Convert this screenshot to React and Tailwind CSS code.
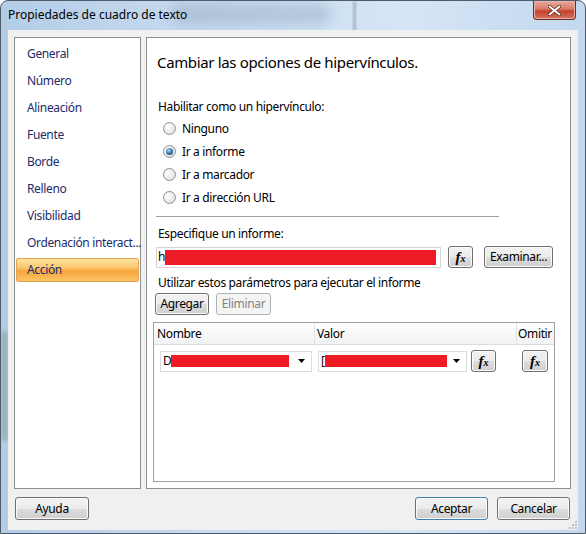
import clsx from 'clsx';

const sections = [
  'General',
  'Número',
  'Alineación',
  'Fuente',
  'Borde',
  'Relleno',
  'Visibilidad',
  'Ordenación interact...',
  'Acción',
];

function Win7Button({ children, className, disabled = false, primary = false }) {
  return (
    <button
      className={clsx(
        'flex h-[22px] items-center justify-center rounded-[3px] border text-[12px] leading-none',
        disabled
          ? 'border-[#adb2b5] bg-[#f4f4f4] text-[#838383]'
          : 'bg-[linear-gradient(to_bottom,#f2f2f2_0%,#ebebeb_50%,#dddddd_51%,#cfcfcf_100%)] text-black shadow-[inset_0_0_0_1px_#fbfbfb]',
        !disabled && (primary ? 'border-[#3c7fb1] shadow-[inset_0_0_0_1px_#a6dcf5]' : 'border-[#707070]'),
        className
      )}
    >
      {children}
    </button>
  );
}

function FxButton({ className }) {
  return (
    <Win7Button className={clsx('h-[20px] w-[25px]', className)}>
      <span className="font-['Liberation_Serif',serif] text-[15px] font-bold italic leading-none tracking-normal">
        f<span className="text-[10px]">x</span>
      </span>
    </Win7Button>
  );
}

function Radio({ label, checked = false }) {
  return (
    <div className="flex h-[23px] items-center">
      <span className="ml-[7px] flex h-[13px] w-[13px] items-center justify-center rounded-full border border-[#8e8f8f] bg-[radial-gradient(circle_at_35%_35%,#ffffff,#d9d9d9)]">
        {checked && (
          <span className="h-[7px] w-[7px] rounded-full bg-[radial-gradient(circle_at_40%_35%,#a9dcf7,#2a6fa3_55%,#173f63)]" />
        )}
      </span>
      <span className="ml-[6px]">{label}</span>
    </div>
  );
}

function DropArrow() {
  return (
    <svg width="7" height="4" viewBox="0 0 7 4" className="ml-auto">
      <path d="M0 0h7L3.5 4z" fill="#000" />
    </svg>
  );
}

function Combo({ lead, redWidth, className }) {
  return (
    <div className={clsx('flex h-[21px] items-center border border-[#dcdcdc] bg-white pl-[2px] pr-[6px]', className)}>
      <span className="leading-none">{lead}</span>
      <span className="h-[12px] bg-[#ed1c24]" style={{ width: redWidth }} />
      <DropArrow />
    </div>
  );
}

export default function App() {
  return (
    <div className="relative flex h-[534px] w-[586px] flex-col overflow-hidden rounded-t-[8px] border border-[#4f5b68] bg-[linear-gradient(to_right,#b4cde6,#c9ddf2_40%,#d5e5f6_70%,#c3d8ee)] font-['Noto_Sans',sans-serif] text-[12px] tracking-[-0.35px] text-black">
      {/* blurred shapes of the window behind the glass frame */}
      <div className="pointer-events-none absolute left-[170px] top-[2px] h-[22px] w-[160px] rounded-full bg-[#8ea3b8] opacity-40 blur-[6px]" />
      <div className="pointer-events-none absolute left-[352px] top-0 h-[30px] w-[3px] bg-[#7d8ea0] opacity-50 blur-[1px]" />
      <div className="pointer-events-none absolute left-0 top-[330px] h-[110px] w-[7px] bg-[#6f9a8a] opacity-50 blur-[2px]" />

      {/* title bar */}
      <div className="relative flex h-[29px] items-start justify-between pl-[7px] pr-[9px]">
        <span className="pt-[6px] text-[12px] leading-[16px] tracking-normal">Propiedades de cuadro de texto</span>
        <button className="flex h-[19px] w-[43px] items-center justify-center rounded-b-[4px] border border-t-0 border-[#6e2a22] bg-[linear-gradient(to_bottom,#e8aa9e_0%,#d77a68_45%,#c4412e_55%,#d5725c_100%)] shadow-[inset_0_0_0_1px_#eab3a7]">
          <svg width="13" height="11" viewBox="0 0 13 11">
            <path
              d="M1.5 1.5l10 8M11.5 1.5l-10 8"
              stroke="#5b2018"
              strokeWidth="3.4"
              strokeLinecap="round"
            />
            <path
              d="M1.5 1.5l10 8M11.5 1.5l-10 8"
              stroke="#ffffff"
              strokeWidth="2"
              strokeLinecap="round"
            />
          </svg>
        </button>
      </div>

      {/* client area */}
      <div className="relative mx-[7px] mb-[3px] flex flex-1 flex-col bg-[#f0f0f0] pl-[6px] pr-[7px] pt-[7px]">
        <div className="flex h-[452px] gap-[5px]">
          {/* section list */}
          <div className="w-[127px] border border-[#8e8f8f] bg-white pt-[2px]">
            {sections.map((name) =>
              name === 'Acción' ? (
                <div key={name} className="flex h-[27px] items-center px-[1px]">
                  <div className="flex h-[24px] w-full items-center rounded-[2px] border border-[#e3a34c] bg-[linear-gradient(to_bottom,#fde4a2_0%,#fbc66e_40%,#f8a43c_55%,#fbc464_100%)] pl-[10px] text-[#1c2b6b]">
                    {name}
                  </div>
                </div>
              ) : (
                <div key={name} className="flex h-[27px] items-center whitespace-nowrap pl-[12px] text-[#1c2b6b]">
                  {name}
                </div>
              )
            )}
          </div>

          {/* action settings */}
          <div className="flex flex-1 flex-col border border-[#8e8f8f] bg-white pl-[9px]">
            <div className="ml-[1px] mt-[13px] h-[22px] text-[15px] leading-[22px]">
              Cambiar las opciones de hipervínculos.
            </div>

            <div className="ml-[2px] mt-[26px] h-[16px] leading-[16px]">Habilitar como un hipervínculo:</div>
            <div className="mt-[2px] flex flex-col">
              <Radio label="Ninguno" />
              <Radio label="Ir a informe" checked />
              <Radio label="Ir a marcador" />
              <Radio label="Ir a dirección URL" />
            </div>

            <div className="mt-[7px] h-px w-[343px] bg-[#a0a0a0]" />

            <div className="ml-[2px] mt-[9px] h-[16px] leading-[16px]">Especifique un informe:</div>
            <div className="mt-[4px] flex h-[22px] items-center">
              <div className="flex h-[21px] w-[285px] items-center border border-[#d5d5d5] bg-white pl-[1px]">
                <span className="leading-none">h</span>
                <span className="h-[15px] w-[271px] bg-[#ed1c24]" />
              </div>
              <FxButton className="ml-[7px]" />
              <Win7Button className="ml-[11px] w-[69px]">Examinar...</Win7Button>
            </div>

            <div className="ml-[2px] mt-[7px] h-[16px] leading-[16px]">
              Utilizar estos parámetros para ejecutar el informe
            </div>
            <div className="ml-[-1px] mt-[2px] flex gap-[7px]">
              <Win7Button className="w-[54px]">Agregar</Win7Button>
              <Win7Button className="w-[55px]" disabled>
                Eliminar
              </Win7Button>
            </div>

            {/* parameter grid */}
            <div className="ml-[-3px] mt-[7px] flex h-[160px] w-[402px] flex-col border border-[#a0a0a0] bg-white">
              <div className="flex h-[22px] border-b border-[#dcdcdc] bg-[linear-gradient(to_bottom,#ffffff,#f1f2f4)]">
                <div className="flex w-[161px] items-center border-r border-[#e1e1e1] pl-[3px]">Nombre</div>
                <div className="flex w-[202px] items-center border-r border-[#e1e1e1] pl-[2px]">Valor</div>
                <div className="flex flex-1 items-center pl-[1px]">Omitir</div>
              </div>
              <div className="flex items-center pt-[5px]">
                <Combo lead="D" redWidth={118} className="ml-[6px] w-[152px]" />
                <Combo lead="[" redWidth={122} className="ml-[6px] w-[149px]" />
                <FxButton className="ml-[4px]" />
                <FxButton className="ml-[26px] w-[26px]" />
              </div>
            </div>
          </div>
        </div>

        {/* dialog buttons */}
        <div className="mt-[8px] flex items-start">
          <Win7Button className="ml-[1px] h-[23px] w-[74px]">Ayuda</Win7Button>
          <Win7Button className="ml-auto h-[23px] w-[73px]" primary>
            Aceptar
          </Win7Button>
          <Win7Button className="ml-[9px] mr-[1px] h-[23px] w-[73px]">Cancelar</Win7Button>
        </div>

        {/* resize grip */}
        <svg width="8" height="8" viewBox="0 0 8 8" className="absolute bottom-[1px] right-[1px]">
          <rect x="6" y="0" width="2" height="2" fill="#c2c2c2" />
          <rect x="3" y="3" width="2" height="2" fill="#c2c2c2" />
          <rect x="6" y="3" width="2" height="2" fill="#c2c2c2" />
          <rect x="0" y="6" width="2" height="2" fill="#c2c2c2" />
          <rect x="3" y="6" width="2" height="2" fill="#c2c2c2" />
          <rect x="6" y="6" width="2" height="2" fill="#c2c2c2" />
        </svg>
      </div>
    </div>
  );
}
